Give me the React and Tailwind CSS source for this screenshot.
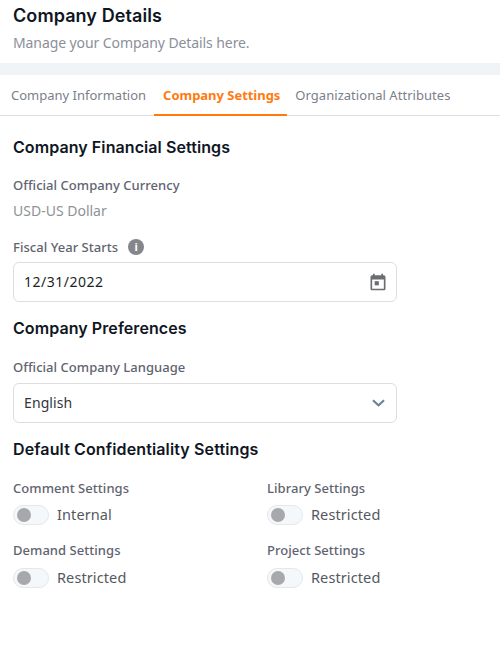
import React from 'react';

const heading = "font-['Inter',sans-serif] font-semibold text-[#0f1623] tracking-[0.08px]";
const label = 'text-[13px] font-medium leading-[18px] tracking-[0.04px] text-[#5f6370]';

function Toggle({ title, value, gap = 'mt-[8px]' }) {
  return (
    <div>
      <div className={label}>{title}</div>
      <div className={`${gap} flex h-5 items-center gap-2`}>
        <span className="flex h-5 w-9 items-center rounded-full border border-[#e4e7eb] bg-[#f5f8fb] pl-[3px]">
          <span className="h-[14px] w-[14px] rounded-full bg-[#a6a8ac]" />
        </span>
        <span className="text-[14.5px] tracking-[0.1px] text-[#55585f]">{value}</span>
      </div>
    </div>
  );
}

export default function App() {
  return (
    <div className="h-[654px] w-[500px] overflow-hidden bg-white font-['Noto_Sans',sans-serif]">
      <div className="h-[63px] px-[13px]">
        <h1 className={`${heading} pt-[4px] text-lg leading-[24px]`}>Company Details</h1>
        <p className="mt-[5px] text-sm leading-[20px] tracking-[-0.09px] text-[#8b8f9a]">Manage your Company Details here.</p>
      </div>
      <div className="h-[12px] bg-[#f1f4f7]" />

      <div className="flex h-[41px] border-b border-[#dddddd] pl-[3px] text-[13px]">
        <div className="flex h-[40px] items-center px-2 pt-[2px] text-[#7b7f89]">Company Information</div>
        <div className="flex h-[41px] items-center border-b-2 border-[#ff7a0f] pl-[9px] pr-[7px] pt-[2px] font-bold tracking-[-0.03px] text-[#ff7a0f]">Company Settings</div>
        <div className="flex h-[40px] items-center px-2 pt-[2px] tracking-[0.04px] text-[#7b7f89]">Organizational Attributes</div>
      </div>

      <div className="px-[13px]">
        <h2 className={`${heading} mt-[20px] text-base leading-[22px]`}>Company Financial Settings</h2>

        <div className={`${label} mt-[18px]`}>Official Company Currency</div>
        <div className="mt-[7px] text-sm leading-[20px] text-[#8f9297]">USD-US Dollar</div>

        <div className="mt-[17px] flex items-center gap-[10px]">
          <span className={label}>Fiscal Year Starts</span>
          <span className="flex h-4 w-4 items-center justify-center rounded-full bg-[#85868c] text-[11px] font-bold text-white">i</span>
        </div>
        <div className="mt-[6px] flex h-10 w-[384px] items-center justify-between rounded-md border border-[#dddddd] pl-[10px] pr-[8px]">
          <span className="text-sm tracking-[0.5px] text-[#1c1f26]">12/31/2022</span>
          <svg width="20" height="20" viewBox="0 0 24 24" fill="#6b6d70">
            <path d="M19 4h-1V2h-2v2H8V2H6v2H5c-1.11 0-2 .9-2 2v14c0 1.1.89 2 2 2h14c1.1 0 2-.9 2-2V6c0-1.1-.9-2-2-2zm0 16H5V9h14v11z" />
            <path d="M8 11h5v5H8z" />
          </svg>
        </div>

        <h2 className={`${heading} mt-[15px] text-base leading-[22px]`}>Company Preferences</h2>

        <div className={`${label} mt-[19px]`}>Official Company Language</div>
        <div className="mt-[7px] flex h-10 w-[384px] items-center justify-between rounded-md border border-[#dddddd] pl-[10px] pr-[11px]">
          <span className="text-sm tracking-[0.1px] text-[#33363d]">English</span>
          <svg width="13" height="8" viewBox="0 0 14 8" fill="none" stroke="#6f7f95" strokeWidth="2.2">
            <path d="M1 1l6 5.5L13 1" />
          </svg>
        </div>

        <h2 className={`${heading} mt-[15px] text-base leading-[22px] tracking-[0.13px]`}>Default Confidentiality Settings</h2>

        <div className="mt-[19px] grid grid-cols-[254px_1fr] gap-y-[16px]">
          <Toggle title="Comment Settings" value="Internal" />
          <Toggle title="Library Settings" value="Restricted" />
          <Toggle title="Demand Settings" value="Restricted" gap="mt-[9px]" />
          <Toggle title="Project Settings" value="Restricted" gap="mt-[9px]" />
        </div>
      </div>
    </div>
  );
}
